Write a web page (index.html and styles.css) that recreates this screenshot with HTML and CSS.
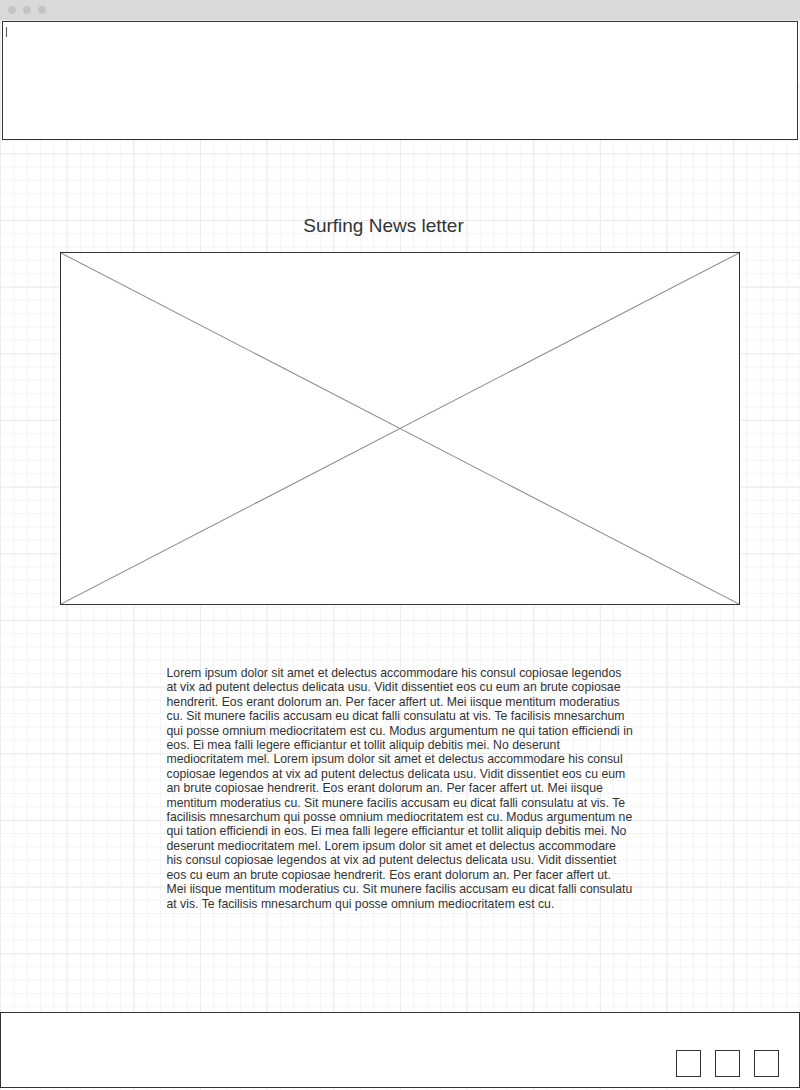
FILE: index.html
```html
<!DOCTYPE html>
<html>
<head>
  <title>Surfing News letter</title>
  <link rel="stylesheet" href="styles.css">
</head>
<body>
  <div class="titlebar">
    <span class="dot"></span>
    <span class="dot"></span>
    <span class="dot"></span>
  </div>

  <div class="canvas">
    <div class="header-box">
      <span class="cursor"></span>
    </div>

    <h1 class="title">Surfing News letter</h1>

    <div class="placeholder">
      <svg viewBox="0 0 100 100" preserveAspectRatio="none">
        <line x1="0" y1="0" x2="100" y2="100" vector-effect="non-scaling-stroke"></line>
        <line x1="100" y1="0" x2="0" y2="100" vector-effect="non-scaling-stroke"></line>
      </svg>
    </div>

    <p class="body-text">Lorem ipsum dolor sit amet et delectus accommodare his consul copiosae legendos at vix ad putent delectus delicata usu. Vidit dissentiet eos cu eum an brute copiosae hendrerit. Eos erant dolorum an. Per facer affert ut. Mei iisque mentitum moderatius cu. Sit munere facilis accusam eu dicat falli consulatu at vis. Te facilisis mnesarchum qui posse omnium mediocritatem est cu. Modus argumentum ne qui tation efficiendi in eos. Ei mea falli legere efficiantur et tollit aliquip debitis mei. No deserunt mediocritatem mel. Lorem ipsum dolor sit amet et delectus accommodare his consul copiosae legendos at vix ad putent delectus delicata usu. Vidit dissentiet eos cu eum an brute copiosae hendrerit. Eos erant dolorum an. Per facer affert ut. Mei iisque mentitum moderatius cu. Sit munere facilis accusam eu dicat falli consulatu at vis. Te facilisis mnesarchum qui posse omnium mediocritatem est cu. Modus argumentum ne qui tation efficiendi in eos. Ei mea falli legere efficiantur et tollit aliquip debitis mei. No deserunt mediocritatem mel. Lorem ipsum dolor sit amet et delectus accommodare his consul copiosae legendos at vix ad putent delectus delicata usu. Vidit dissentiet eos cu eum an brute copiosae hendrerit. Eos erant dolorum an. Per facer affert ut. Mei iisque mentitum moderatius cu. Sit munere facilis accusam eu dicat falli consulatu at vis. Te facilisis mnesarchum qui posse omnium mediocritatem est cu.</p>

    <div class="footer">
      <span class="square"></span>
      <span class="square"></span>
      <span class="square"></span>
    </div>
  </div>
</body>
</html>
```

FILE: styles.css
```css
/* Wireframe page */
* {
  box-sizing: border-box;
}

body {
  margin: 0;
  font-family: "Liberation Sans", Arial, sans-serif;
  color: #333;
  background-color: #fff;
}

.titlebar {
  height: 20px;
  background-color: #d9d9d9;
  display: flex;
  align-items: center;
  gap: 7px;
  padding-left: 8px;
}

.dot {
  width: 8px;
  height: 8px;
  border-radius: 50%;
  background-color: #c4c4c4;
}

.canvas {
  height: 1070px;
  display: flex;
  flex-direction: column;
  background-color: #fff;
  background-image:
    linear-gradient(#ebebeb 1px, transparent 1px),
    linear-gradient(90deg, #ebebeb 1px, transparent 1px),
    linear-gradient(#f4f4f4 1px, transparent 1px),
    linear-gradient(90deg, #f4f4f4 1px, transparent 1px);
  background-size: 66.667px 66.667px, 66.667px 66.667px, 13.333px 13.333px, 13.333px 13.333px;
}

.header-box {
  margin: 1px 2px 0;
  height: 119px;
  border: 1px solid #333;
  background-color: #fff;
  padding: 5px 0 0 3px;
}

.cursor {
  display: block;
  width: 1px;
  height: 10px;
  background-color: #555;
}

.title {
  margin: 75px 0 0;
  padding-right: 33px;
  font-size: 19px;
  line-height: 22px;
  font-weight: normal;
  text-align: center;
  color: #333;
}

.placeholder {
  width: 680px;
  height: 353px;
  margin: 15px auto 0;
  border: 1px solid #333;
  background-color: #fff;
}

.placeholder svg {
  display: block;
  width: 100%;
  height: 100%;
}

.placeholder line {
  stroke: #888;
  stroke-width: 1;
}

.body-text {
  width: 467px;
  margin: 61px auto 0;
  font-size: 12.25px;
  line-height: 14.4px;
  color: #333;
}

.footer {
  margin-top: auto;
  margin-bottom: 2px;
  height: 76px;
  border: 1px solid #333;
  background-color: #fff;
  display: flex;
  justify-content: flex-end;
  align-items: flex-end;
  gap: 14px;
  padding: 0 20px 10px 0;
}

.square {
  width: 25px;
  height: 27px;
  border: 1px solid #333;
}
```
